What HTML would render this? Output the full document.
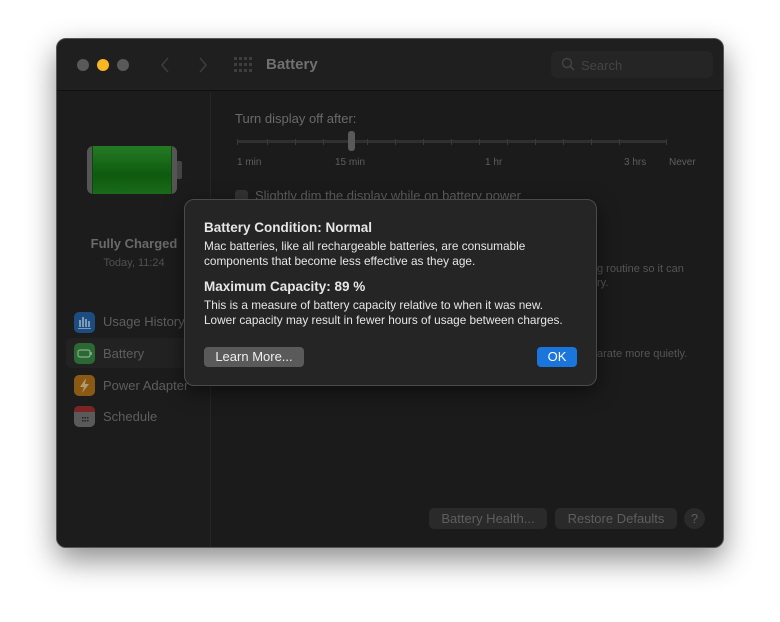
<!DOCTYPE html>
<html><head><meta charset="utf-8"><style>
*{box-sizing:border-box;margin:0;padding:0}
body{width:780px;height:622px;background:#fff;font-family:"Liberation Sans",sans-serif;position:relative;overflow:hidden}
.win{position:absolute;left:56px;top:38px;width:668px;height:510px;background:#1b1b1b;border-radius:10px;border:1px solid #555;box-shadow:0 12px 30px rgba(0,0,0,.45);overflow:hidden}
.tb{position:absolute;left:0;top:0;width:100%;height:52px;background:#1f1f1f;border-bottom:1px solid #111}
.dot{position:absolute;top:20px;width:12px;height:12px;border-radius:50%;background:#595959}
.side{position:absolute;left:0;top:53px;width:154px;bottom:0;background:#1c1c1c;border-right:1px solid #262626}
.t{position:absolute;white-space:nowrap;color:#5e5e5e}
.ico{position:absolute;left:17px;width:21px;height:21px;border-radius:5px}
.dlg{position:absolute;left:184px;top:199px;width:413px;height:187px;background:#252525;border:1px solid #4a4a4a;border-radius:10px;box-shadow:0 6px 20px rgba(0,0,0,.5)}
.dlg .t{color:#e6e6e6}
.btn{position:absolute;background:#2a2a2a;border-radius:5px;color:#5e5e5e;font-size:13px;text-align:center;line-height:21px}
.tick{position:absolute;top:100px;width:1px;height:6px;background:#3a3a3a}
</style></head><body>
<div class="win">
 <div class="tb">
  <div class="dot" style="left:20px"></div>
  <div class="dot" style="left:40px;background:#f6b723"></div>
  <div class="dot" style="left:60px"></div>
  <svg style="position:absolute;left:102px;top:17px" width="12" height="18"><path d="M9 2 L3 9 L9 16" stroke="#3c3c3c" stroke-width="1.6" fill="none"/></svg>
  <svg style="position:absolute;left:140px;top:17px" width="12" height="18"><path d="M3 2 L9 9 L3 16" stroke="#3c3c3c" stroke-width="1.6" fill="none"/></svg>
  <svg style="position:absolute;left:177px;top:18px" width="18" height="16" fill="#3e3e3e">
   <rect x="0" y="0" width="3" height="3"/><rect x="5" y="0" width="3" height="3"/><rect x="10" y="0" width="3" height="3"/><rect x="15" y="0" width="3" height="3"/>
   <rect x="0" y="6" width="3" height="3"/><rect x="5" y="6" width="3" height="3"/><rect x="10" y="6" width="3" height="3"/><rect x="15" y="6" width="3" height="3"/>
   <rect x="0" y="12" width="3" height="3"/><rect x="5" y="12" width="3" height="3"/><rect x="10" y="12" width="3" height="3"/><rect x="15" y="12" width="3" height="3"/></svg>
  <div class="t" style="left:209px;top:17px;font-size:15px;font-weight:bold;color:#707070">Battery</div>
  <div style="position:absolute;left:494px;top:12px;width:162px;height:27px;border-radius:6px;background:#252525"></div>
  <svg style="position:absolute;left:504px;top:18px" width="14" height="14"><circle cx="6" cy="6" r="4.5" stroke="#444" stroke-width="1.4" fill="none"/><path d="M9.5 9.5 L13 13" stroke="#444" stroke-width="1.5"/></svg>
  <div class="t" style="left:524px;top:19px;font-size:13px;color:#444">Search</div>
 </div>
 <div class="side">
  <div style="position:absolute;left:30px;top:54px;width:90px;height:48px;border-radius:6px;background:#555;padding:0 5px"><div style="height:100%;background:linear-gradient(#257a25,#0e5a0e 60%,#1a6a1a);border-left:1px solid #0c4a0c;border-right:1px solid #0c4a0c"></div></div>
  <div style="position:absolute;left:120px;top:69px;width:5px;height:18px;border-radius:0 2px 2px 0;background:#444"></div>
  <div class="t" style="left:0;width:154px;text-align:center;top:144px;font-size:13px;font-weight:bold;color:#6a6a6a">Fully Charged</div>
  <div class="t" style="left:0;width:154px;text-align:center;top:165px;font-size:11px;color:#505050">Today, 11:24</div>
  <div style="position:absolute;left:9px;top:246px;width:145px;height:30px;border-radius:6px;background:#222"></div>
  <div class="ico" style="top:220px;background:#1d4c80"><svg width="21" height="21"><g fill="#7d9ab8"><rect x="5" y="8" width="2" height="7"/><rect x="8" y="5" width="2" height="10"/><rect x="11" y="7" width="2" height="8"/><rect x="14" y="9" width="2" height="6"/><rect x="4" y="16" width="13" height="1"/></g></svg></div>
  <div class="t" style="left:46px;top:222px;font-size:13px">Usage History</div>
  <div class="ico" style="top:251px;background:#2a6a32"><svg width="21" height="21"><rect x="4" y="7" width="12" height="7" rx="2" stroke="#8aa98d" fill="none" stroke-width="1.2"/><rect x="16.5" y="9" width="1.3" height="3" fill="#8aa98d"/></svg></div>
  <div class="t" style="left:46px;top:254px;font-size:13px">Battery</div>
  <div class="ico" style="top:283px;background:#8a5a14"><svg width="21" height="21"><path d="M12 3 L6 12 L10 12 L8 18 L15 9 L11 9 Z" fill="#b59a70"/></svg></div>
  <div class="t" style="left:46px;top:286px;font-size:13px">Power Adapter</div>
  <div class="ico" style="top:314px;background:#5a5a5a;overflow:hidden"><div style="height:6px;background:#7a2424"></div><svg width="21" height="15"><g fill="#222"><rect x="8" y="5" width="1.5" height="1.5"/><rect x="10.5" y="5" width="1.5" height="1.5"/><rect x="13" y="5" width="1.5" height="1.5"/><rect x="8" y="8" width="1.5" height="1.5"/><rect x="10.5" y="8" width="1.5" height="1.5"/><rect x="13" y="8" width="1.5" height="1.5"/></g></svg></div>
  <div class="t" style="left:46px;top:317px;font-size:13px">Schedule</div>
 </div>
 <div class="t" style="left:178px;top:72px;font-size:13px;color:#6a6a6a">Turn display off after:</div>
 <div style="position:absolute;left:180px;top:101px;width:430px;height:3px;background:#303030"></div>
 <div class="tick" style="left:180px"></div><div class="tick" style="left:210px"></div><div class="tick" style="left:238px"></div><div class="tick" style="left:266px"></div><div class="tick" style="left:310px"></div><div class="tick" style="left:338px"></div><div class="tick" style="left:366px"></div><div class="tick" style="left:394px"></div><div class="tick" style="left:422px"></div><div class="tick" style="left:450px"></div><div class="tick" style="left:478px"></div><div class="tick" style="left:506px"></div><div class="tick" style="left:534px"></div><div class="tick" style="left:562px"></div><div class="tick" style="left:609px"></div>
 <div style="position:absolute;left:291px;top:92px;width:7px;height:20px;border-radius:3px;background:#595959"></div>
 <div class="t" style="left:180px;top:118px;font-size:10px">1 min</div>
 <div class="t" style="left:278px;top:118px;font-size:10px">15 min</div>
 <div class="t" style="left:428px;top:118px;font-size:10px">1 hr</div>
 <div class="t" style="left:567px;top:118px;font-size:10px">3 hrs</div>
 <div class="t" style="left:612px;top:118px;font-size:10px">Never</div>
 <div style="position:absolute;left:178px;top:151px;width:13px;height:13px;border-radius:3px;background:#333"></div>
 <div class="t" style="left:198px;top:149px;font-size:13px">Slightly dim the display while on battery power</div>
 <div class="t" style="left:540px;top:224px;font-size:11px;color:#555">g routine so it can</div>
 <div class="t" style="left:540px;top:238px;font-size:11px;color:#555">ry.</div>
 <div class="t" style="left:540px;top:309px;font-size:11px;color:#555">arate more quietly.</div>
 <div class="btn" style="left:372px;top:469px;width:118px">Battery Health...</div>
 <div class="btn" style="left:498px;top:469px;width:122px">Restore Defaults</div>
 <div class="btn" style="left:627px;top:469px;width:21px;border-radius:50%">?</div>
</div>
<div class="dlg">
 <div class="t" style="left:19px;top:20px;font-size:13.5px;font-weight:bold">Battery Condition: Normal</div>
 <div class="t" style="left:19px;top:39px;font-size:11.8px;line-height:15px">Mac batteries, like all rechargeable batteries, are consumable<br>components that become less effective as they age.</div>
 <div class="t" style="left:19px;top:79px;font-size:13.5px;font-weight:bold">Maximum Capacity: 89 %</div>
 <div class="t" style="left:19px;top:98px;font-size:11.8px;line-height:15px">This is a measure of battery capacity relative to when it was new.<br>Lower capacity may result in fewer hours of usage between charges.</div>
 <div style="position:absolute;left:19px;top:147px;width:100px;height:20px;border-radius:4px;background:#5a5a5a;color:#eee;font-size:13px;text-align:center;line-height:20px">Learn More...</div>
 <div style="position:absolute;left:352px;top:147px;width:40px;height:20px;border-radius:4px;background:#1a75dd;color:#fff;font-size:13px;text-align:center;line-height:20px">OK</div>
</div>
</body></html>
